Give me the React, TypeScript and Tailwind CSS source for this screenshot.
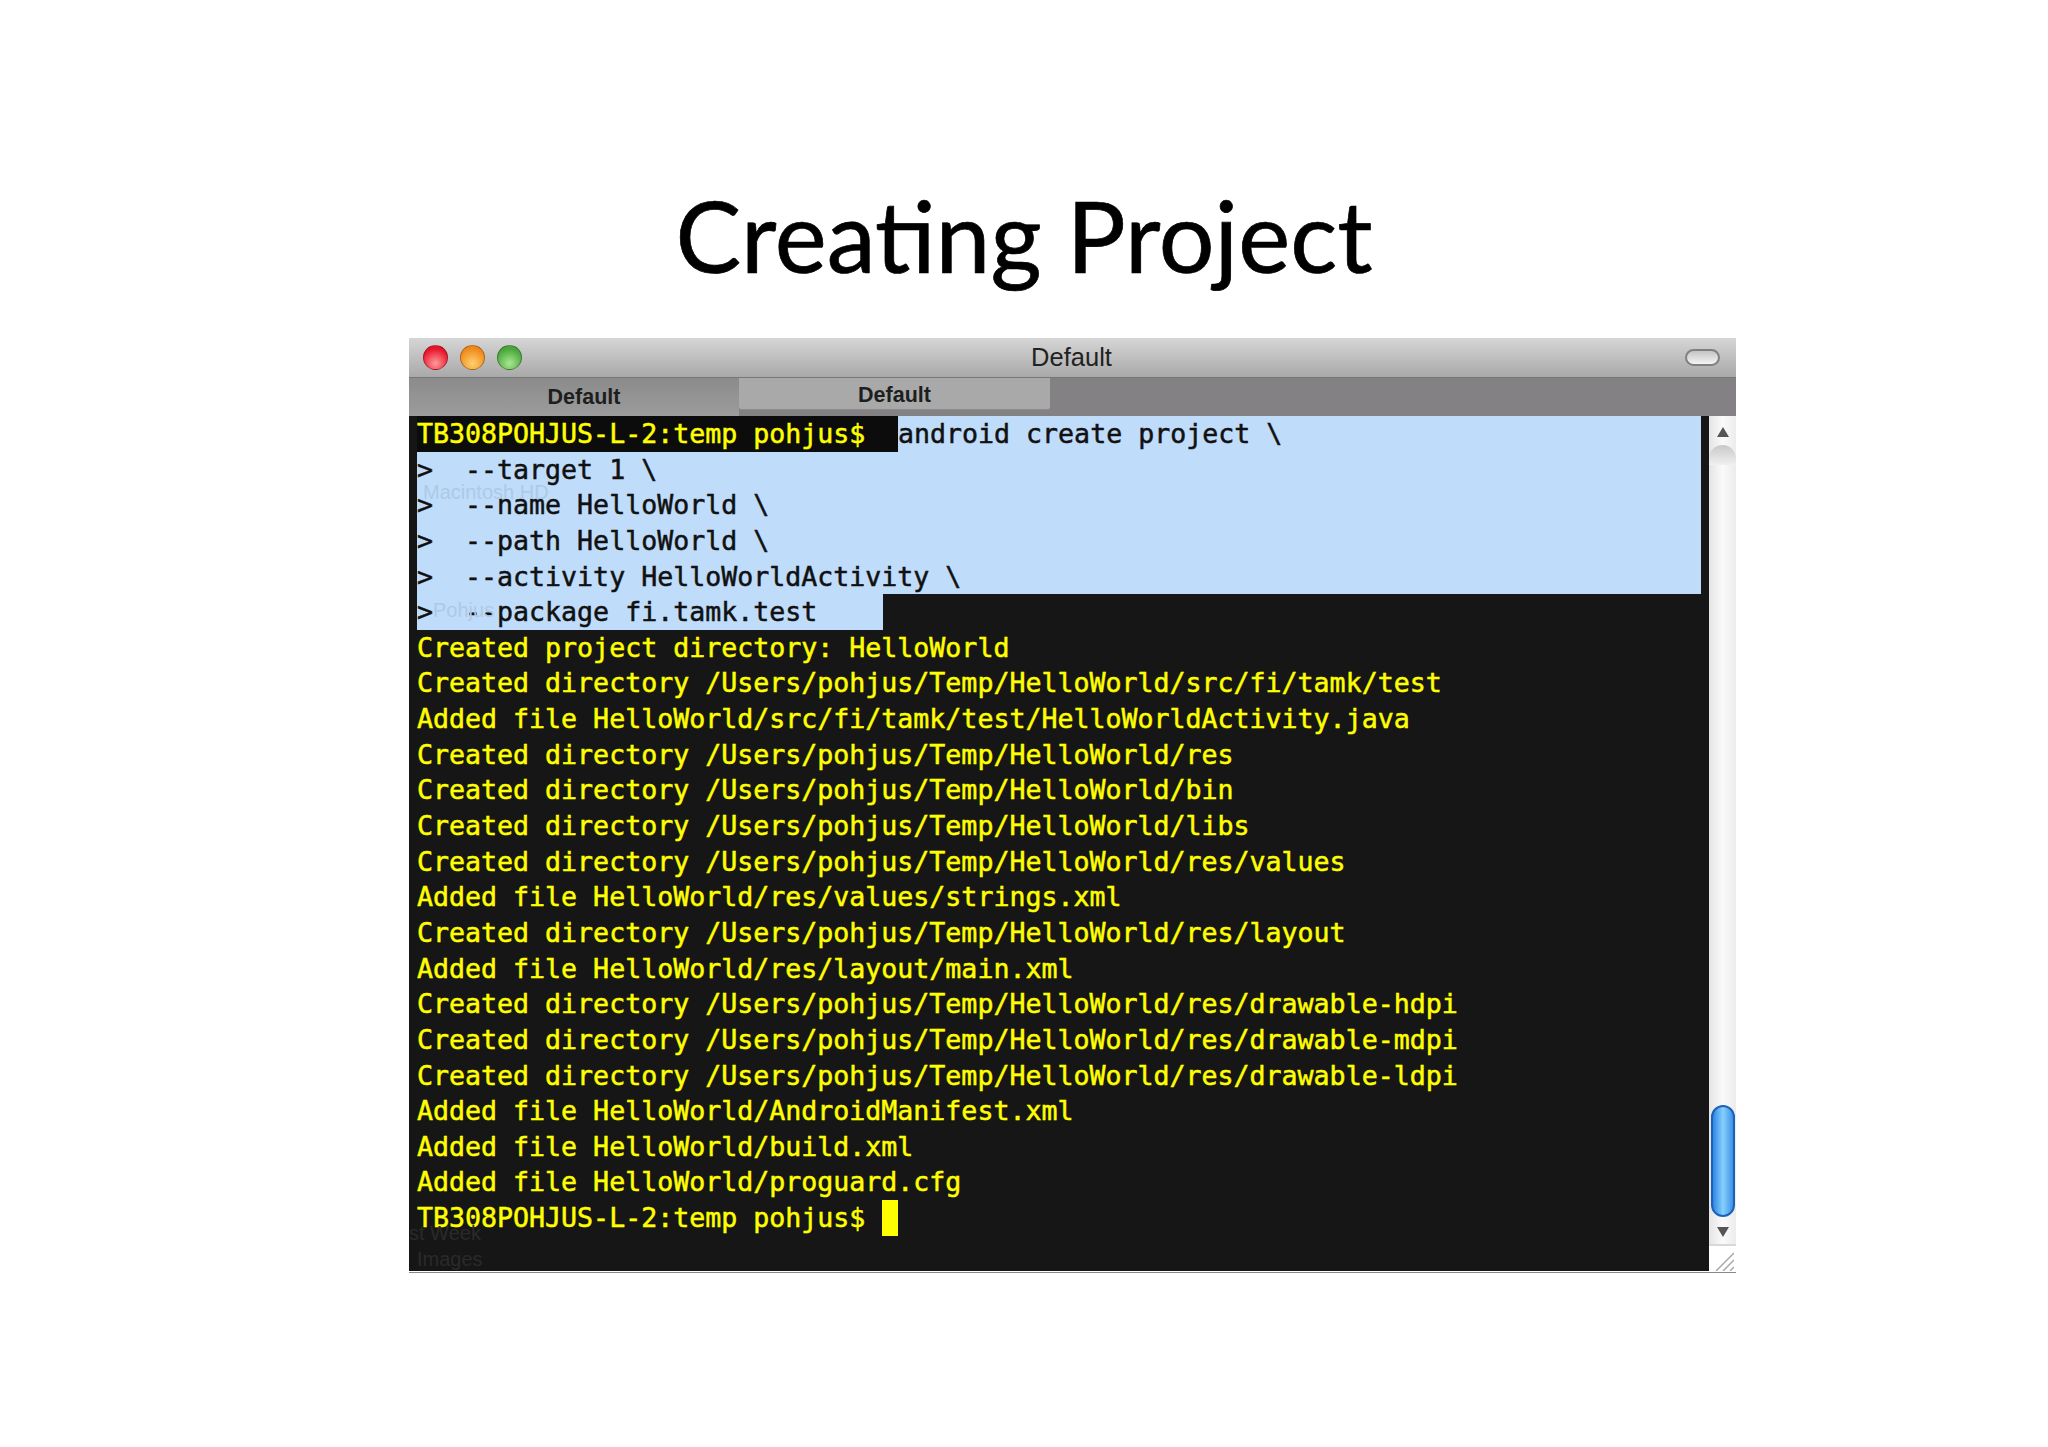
const MONO = "font-['DejaVu_Sans_Mono','Liberation_Mono',monospace]";

const SELECTED = [
  { text: '>  --target 1 \\', full: true },
  { text: '>  --name HelloWorld \\', full: true },
  { text: '>  --path HelloWorld \\', full: true },
  { text: '>  --activity HelloWorldActivity \\', full: true },
  { text: '>  --package fi.tamk.test', full: false },
];

const OUTPUT = [
  'Created project directory: HelloWorld',
  'Created directory /Users/pohjus/Temp/HelloWorld/src/fi/tamk/test',
  'Added file HelloWorld/src/fi/tamk/test/HelloWorldActivity.java',
  'Created directory /Users/pohjus/Temp/HelloWorld/res',
  'Created directory /Users/pohjus/Temp/HelloWorld/bin',
  'Created directory /Users/pohjus/Temp/HelloWorld/libs',
  'Created directory /Users/pohjus/Temp/HelloWorld/res/values',
  'Added file HelloWorld/res/values/strings.xml',
  'Created directory /Users/pohjus/Temp/HelloWorld/res/layout',
  'Added file HelloWorld/res/layout/main.xml',
  'Created directory /Users/pohjus/Temp/HelloWorld/res/drawable-hdpi',
  'Created directory /Users/pohjus/Temp/HelloWorld/res/drawable-mdpi',
  'Created directory /Users/pohjus/Temp/HelloWorld/res/drawable-ldpi',
  'Added file HelloWorld/AndroidManifest.xml',
  'Added file HelloWorld/build.xml',
  'Added file HelloWorld/proguard.cfg',
];

function TrafficLight({ color }: { color: string }) {
  return <div className={`h-[25px] w-[25px] rounded-full border border-black/30 ${color}`} />;
}

function TitleBar() {
  return (
    <div className="flex h-[39px] items-center bg-gradient-to-b from-[#d6d6d6] to-[#a9a9a9] pl-[14px] pr-[16px]">
      <div className="flex w-[150px] gap-[12px]">
        <TrafficLight color="bg-[radial-gradient(circle_at_50%_75%,#ff9a9a,#e8142c_70%)]" />
        <TrafficLight color="bg-[radial-gradient(circle_at_50%_75%,#ffd070,#f08a1c_70%)]" />
        <TrafficLight color="bg-[radial-gradient(circle_at_50%_75%,#a8e890,#4aa63c_70%)]" />
      </div>
      <div className="flex-1 text-center font-['Liberation_Sans',sans-serif] text-[25.5px] leading-[39px] text-[#222]">
        Default
      </div>
      <div className="flex w-[150px] justify-end">
        <div className="h-[17px] w-[35px] rounded-full border-2 border-[#808080] bg-gradient-to-b from-[#c4c4c4] to-[#f4f4f4]" />
      </div>
    </div>
  );
}

function TabBar() {
  return (
    <div className="flex h-[39px] border-t border-[#777] bg-[#838183] font-['Liberation_Sans',sans-serif] text-[21.5px] font-bold text-[#1e1e1e]">
      <div className="flex w-[330px] items-center justify-center bg-gradient-to-b from-[#8b8b8b] to-[#9c9c9c] pl-[20px] pt-[1px]">
        Default
      </div>
      <div className="mb-[6px] flex w-[311px] items-center justify-center rounded-b-[3px] border-b border-[#8c8c8c] bg-[#a9a9a9] pt-[3px]">
        Default
      </div>
    </div>
  );
}

function Terminal() {
  return (
    <div className={`relative h-[855px] flex-1 overflow-hidden bg-[#161616] pl-[8px] pr-[8px] ${MONO} text-[26.6px] leading-[35.65px] whitespace-pre text-[#ffff00] [-webkit-text-stroke:0.5px]`}>
      <div className="flex h-[35.65px]">
        <span className="w-[481px] bg-[#0c0c0c]">TB308POHJUS-L-2:temp pohjus$</span>
        <span className="flex-1 bg-[#bfdcfb] text-[#111]">android create project \</span>
      </div>
      {SELECTED.map((row) => (
        <div
          key={row.text}
          className={`h-[35.65px] bg-[#bfdcfb] text-[#111] ${row.full ? 'w-full' : 'w-[466px]'}`}
        >
          {row.text}
        </div>
      ))}
      {OUTPUT.map((line) => (
        <div key={line} className="h-[35.65px]">
          {line}
        </div>
      ))}
      <div className="flex h-[35.65px] items-center">
        <span className="w-[465px]">TB308POHJUS-L-2:temp pohjus$</span>
        <span className="h-[36px] w-[16px] bg-[#ffff00]" />
      </div>
      {/* ghost of the finder window behind the translucent terminal */}
      <div className="absolute left-[14px] top-[64px] font-['Liberation_Sans',sans-serif] text-[20px] leading-[24px] text-[#aec9e6] [-webkit-text-stroke:0]">Macintosh HD</div>
      <div className="absolute left-[24px] top-[182px] font-['Liberation_Sans',sans-serif] text-[20px] leading-[24px] text-[#aec9e6] [-webkit-text-stroke:0]">Pohjus</div>
      <div className="absolute left-[0px] top-[805px] font-['Liberation_Sans',sans-serif] text-[20px] leading-[24px] text-[#2a2a2a] [-webkit-text-stroke:0]">st Week</div>
      <div className="absolute left-[8px] top-[831px] font-['Liberation_Sans',sans-serif] text-[20px] leading-[24px] text-[#2a2a2a] [-webkit-text-stroke:0]">Images</div>
    </div>
  );
}

function Scrollbar() {
  return (
    <div className="flex w-[27px] flex-col items-center bg-gradient-to-r from-[#e4e4e4] via-[#fafafa] to-[#ececec]">
      <svg width="14" height="12" viewBox="0 0 14 12" className="mt-[10px] shrink-0">
        <path d="M7 1 L13 11 H1 Z" fill="#555" />
      </svg>
      <div className="mt-[7px] h-[20px] w-full rounded-t-full bg-gradient-to-b from-[#c8c8c8] to-[#f0f0f0]" />
      <div className="mt-[640px] h-[112px] w-[24px] shrink-0 rounded-full border-2 border-[#1c62b8] bg-gradient-to-r from-[#2d86e4] via-[#86d0fc] to-[#3c92e6]" />
      <svg width="14" height="12" viewBox="0 0 14 12" className="mt-[9px] shrink-0">
        <path d="M7 11 L13 1 H1 Z" fill="#555" />
      </svg>
      <div className="mt-[6px] flex h-[28px] w-full justify-end border-t-2 border-[#d8d8d8] bg-white pr-[2px] pt-[5px]">
        <svg width="20" height="20" viewBox="0 0 20 20">
          <path d="M2 20 L20 2 M9 20 L20 9 M16 20 L20 16" stroke="#a8a8a8" strokeWidth="1.5" fill="none" />
        </svg>
      </div>
    </div>
  );
}

export default function App() {
  return (
    <div className="min-h-[1447px] bg-white">
      <h1 className="h-[338px] pt-[175px] text-center font-['Lato','Open_Sans',sans-serif] text-[98.4px] leading-[120px] text-black [-webkit-text-stroke:0.7px]">
        Creating Project
      </h1>
      <div className="ml-[409px] w-[1327px]">
        <TitleBar />
        <TabBar />
        <div className="flex border-b border-[#888]">
          <Terminal />
          <Scrollbar />
        </div>
      </div>
    </div>
  );
}
